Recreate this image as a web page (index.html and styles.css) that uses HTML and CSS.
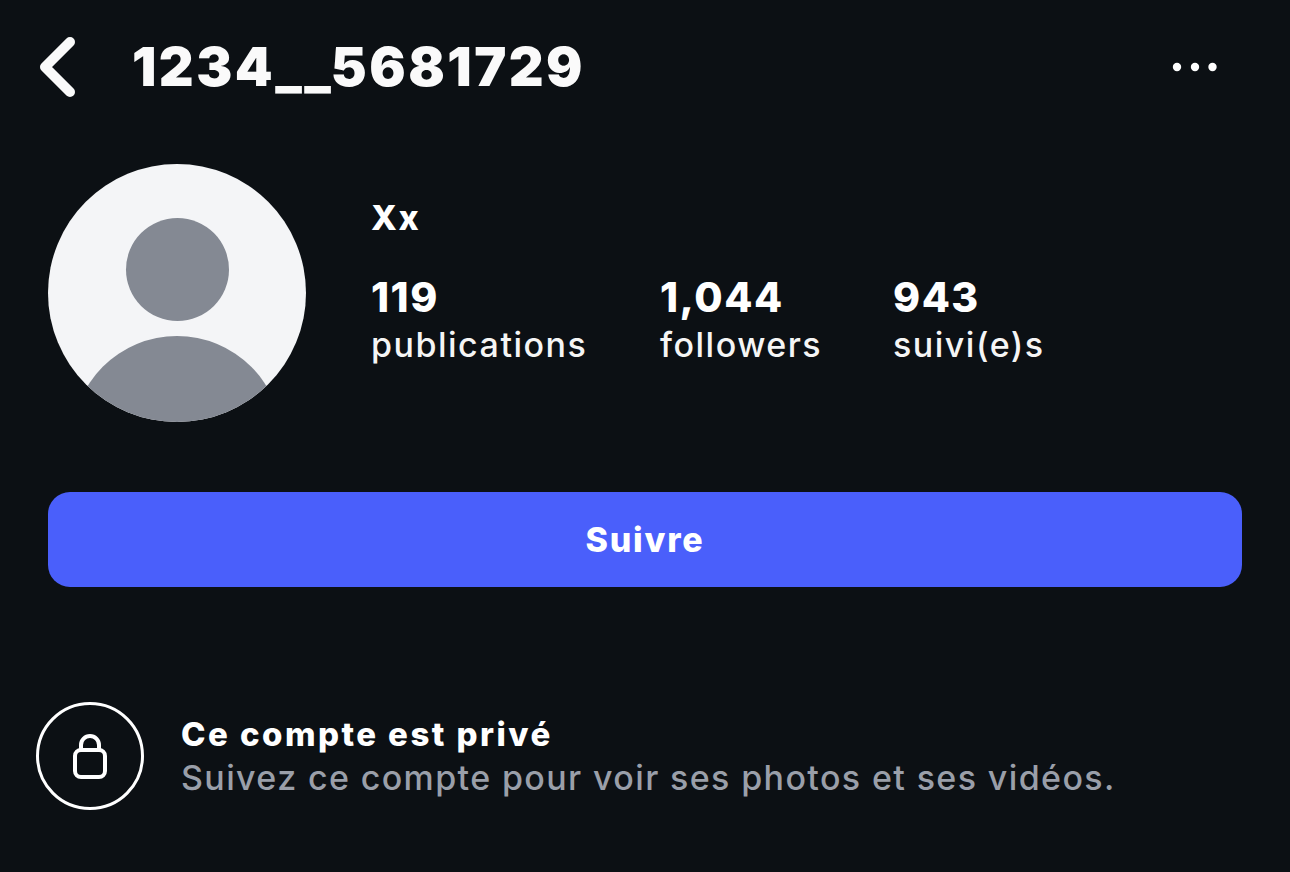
FILE: index.html
```html
<!DOCTYPE html>
<html lang="fr">
<head>
  <meta charset="UTF-8" />
  <title>1234__5681729</title>
  <link rel="stylesheet" href="styles.css">
</head>
<body>
  <header class="topbar">
    <svg class="back" width="38" height="60" viewBox="0 0 38 60" fill="none">
      <path d="M31 5 L6 30 L31 55" stroke="#fafafa" stroke-width="10" stroke-linecap="round" stroke-linejoin="round"/>
    </svg>
    <h1 class="username">1234__5681729</h1>
    <svg class="more" width="46" height="12" viewBox="0 0 46 12" fill="#fff">
      <circle cx="5" cy="6" r="4.2"/>
      <circle cx="23" cy="6" r="4.2"/>
      <circle cx="40.500" cy="6" r="4.2"/>
    </svg>
  </header>

  <section class="profile">
    <svg class="avatar" width="258" height="258" viewBox="0 0 258 258">
      <defs>
        <clipPath id="avatar-clip"><circle cx="129" cy="129" r="129"/></clipPath>
      </defs>
      <circle cx="129" cy="129" r="129" fill="#f4f5f7"/>
      <circle cx="129.500" cy="105.500" r="51.500" fill="#848993"/>
      <circle cx="129" cy="277" r="105" fill="#848993" clip-path="url(#avatar-clip)"/>
    </svg>
    <div class="info">
      <div class="name">Xx</div>
      <div class="stats">
        <div class="stat stat-posts"><strong>119</strong><span>publications</span></div>
        <div class="stat stat-followers"><strong>1,044</strong><span>followers</span></div>
        <div class="stat"><strong>943</strong><span>suivi(e)s</span></div>
      </div>
    </div>
  </section>

  <button class="follow" type="button">Suivre</button>

  <section class="private">
    <div class="lock">
      <svg width="36" height="48" viewBox="0 0 36 48" fill="none" stroke="#fff" stroke-width="4">
        <rect x="3" y="18" width="30" height="27" rx="6"/>
        <path d="M9 18 V13 A9 9 0 0 1 27 13 V18"/>
      </svg>
    </div>
    <div class="private-text">
      <div class="private-title">Ce compte est privé</div>
      <div class="private-sub">Suivez ce compte pour voir ses photos et ses vidéos.</div>
    </div>
  </section>
</body>
</html>
```

FILE: styles.css
```css
* {
  box-sizing: border-box;
  margin: 0;
  padding: 0;
}

body {
  font-family: "Inter", "Liberation Sans", sans-serif;
  background: #0c1014;
  color: #fff;
  height: 872px;
  overflow: hidden;
}

.topbar {
  display: flex;
  align-items: center;
  height: 60px;
  margin-top: 37px;
  padding: 0 72px 0 39px;
}

.back {
  flex: none;
}

.username {
  flex: 1;
  margin-left: 55px;
  font-size: 54px;
  font-weight: 900;
  letter-spacing: 2.45px;
  line-height: 60px;
  color: #fafafa;
}

.profile {
  display: flex;
  margin-top: 67px;
  padding-left: 48px;
}

.avatar {
  flex: none;
}

.info {
  margin-left: 65px;
  padding-top: 34px;
}

.name {
  font-size: 34px;
  font-weight: 800;
  letter-spacing: 1.5px;
  line-height: 40px;
}

.stats {
  display: flex;
  margin-top: 37px;
}

.stat {
  display: flex;
  flex-direction: column;
}

.stat strong {
  font-size: 41px;
  font-weight: 800;
  letter-spacing: 1.5px;
  line-height: 44px;
}

.stat span {
  font-size: 34px;
  font-weight: 500;
  letter-spacing: 1.5px;
  line-height: 52px;
  color: #f5f5f5;
}

.stat-posts {
  width: 289px;
}

.stat-followers {
  width: 233px;
}

.follow {
  display: block;
  width: 1194px;
  height: 95px;
  margin: 70px 0 0 48px;
  border: none;
  border-radius: 22px;
  background: #4a5ffb;
  color: #fff;
  font-family: inherit;
  font-size: 34px;
  font-weight: 800;
  letter-spacing: 1.8px;
}

.private {
  display: flex;
  align-items: center;
  margin-top: 115px;
  padding-left: 36px;
}

.lock {
  display: flex;
  align-items: center;
  justify-content: center;
  flex: none;
  width: 108px;
  height: 108px;
  border: 3px solid #fff;
  border-radius: 50%;
}

.private-text {
  margin-left: 37px;
}

.private-title {
  font-size: 33px;
  font-weight: 800;
  letter-spacing: 2.45px;
  line-height: 44px;
}

.private-sub {
  font-size: 34px;
  font-weight: 500;
  letter-spacing: 1.37px;
  line-height: 44px;
  color: #9a9fa9;
}
```
